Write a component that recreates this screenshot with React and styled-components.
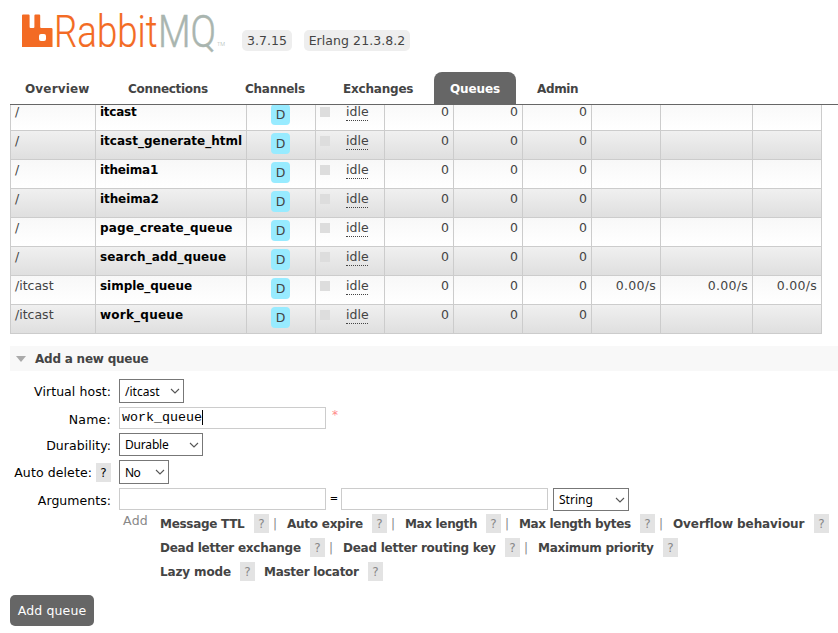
import React from 'react';
import styled, { createGlobalStyle } from 'styled-components';

const GlobalStyle = createGlobalStyle`
  * { box-sizing: border-box; }
  html, body { margin: 0; padding: 0; background: #fff; overflow: hidden; }
  body { font: 12.5px/15px "DejaVu Sans", Verdana, sans-serif; color: #444; }
`;

const Page = styled.div`
  width: 838px;
  height: 633px;
  overflow: hidden;
  display: flex;
  flex-direction: column;
`;

const Text = styled.span`
  letter-spacing: ${(p) => p.$track || 0}px;
  white-space: nowrap;
`;

/* header */
const Header = styled.header`
  flex: none;
  height: 105px;
  margin-left: 10px;
  border-bottom: 1px solid #666;
  display: flex;
  flex-direction: column;
  justify-content: space-between;
`;
const Brand = styled.div`
  display: flex;
  align-items: flex-start;
  height: 60px;
`;
const Logo = styled.svg`
  display: block;
  width: 222px;
  height: 56px;
  margin-right: 10px;
`;
const Version = styled.span`
  height: 21px;
  width: ${(p) => p.$width}px;
  margin: 30px 12px 0 0;
  padding-top: 3px;
  border-radius: 5px;
  background: #eee;
  text-align: center;
`;
const Tabs = styled.nav`
  display: flex;
  height: 32px;
`;
const Tab = styled.a`
  width: ${(p) => p.$width}px;
  padding: 10px 0 0 ${(p) => p.$indent}px;
  border-radius: 8px 8px 0 0;
  font-size: 12px;
  font-weight: bold;
  color: ${(p) => (p.$active ? '#fff' : '#444')};
  background: ${(p) => (p.$active ? '#666' : 'transparent')};
`;

/* queue table */
const TableClip = styled.div`
  flex: none;
  height: 229px;
  margin-left: 10px;
  overflow: hidden;
  display: flex;
  flex-direction: column;
  justify-content: flex-end;
`;
const Row = styled.div`
  flex: none;
  width: 812px;
  height: 29px;
  display: grid;
  grid-template-columns: 85px 151px 69px 69px 69px 69px 69px 69px 92px 69px;
  border-right: 1px solid #ccc;
  border-bottom: 1px solid #ccc;
  background: ${(p) =>
    p.$shaded
      ? 'linear-gradient(#f0f0f0, #dfdfdf)'
      : 'linear-gradient(#f8f8f8, #ffffff)'};
`;
const Cell = styled.div`
  border-left: 1px solid #ccc;
  padding: 2px 4px 0;
  text-align: ${(p) => p.$align || 'left'};
`;
const QueueName = styled(Cell)`
  padding-top: 3px;
  font-size: 12px;
  font-weight: bold;
  color: #000;
  white-space: nowrap;
`;
const Feature = styled.span`
  display: block;
  width: 19px;
  height: 21px;
  padding-top: 3px;
  border-radius: 4px;
  background: #98ebff;
  text-align: center;
`;
const FeatureCell = styled(Cell)`
  padding: 2px 0 0 24px;
`;
const StateCell = styled(Cell)`
  display: flex;
  align-items: flex-start;
`;
const StateMark = styled.i`
  width: 10px;
  height: 10px;
  margin: 3px 16px 0 0;
  background: #ddd;
`;
const State = styled.span`
  width: 22px;
  height: 17px;
  border-bottom: 1px dotted #444;
`;

/* add queue */
const SectionTitle = styled.h2`
  flex: none;
  display: flex;
  align-items: center;
  height: 25px;
  margin: 12px 0 8px 10px;
  padding-left: 6px;
  background: #f8f8f8;
  font-size: 12px;
  line-height: 15px;
`;
const TitleText = styled(Text)`
  padding-top: 1px;
`;
const Arrow = styled.i`
  border: solid transparent;
  border-width: 6px 5.5px 0;
  border-top-color: #aaa;
  margin-right: 9px;
`;
const FormRow = styled.div`
  flex: none;
  display: flex;
  height: ${(p) => p.$height}px;
  margin-bottom: 4px;
  color: #000;
`;
const Label = styled.label`
  width: 111px;
  margin-right: 8px;
  height: 24px;
  display: flex;
  align-items: center;
  justify-content: flex-end;
`;
const LabelText = styled(Text)`
  padding-top: 1px;
`;
const Help = styled.span`
  width: 15px;
  height: 19px;
  padding-top: 3px;
  margin-left: ${(p) => p.$gap}px;
  text-align: center;
  font-size: 12px;
  font-weight: normal;
  background: #e3e3e3;
  color: ${(p) => (p.$dark ? '#000' : '#888')};
`;
const SelectBox = styled.div`
  display: flex;
  align-items: center;
  justify-content: space-between;
  width: ${(p) => p.$width}px;
  height: 100%;
  padding: 0 3px 0 5px;
  border: 1px solid #777;
  color: #000;
  font: 12px/15px "Noto Sans", sans-serif;
`;
const Field = styled.div`
  width: 207px;
  height: 22px;
  padding: 1px 0 0 2px;
  border: 1px solid #ccc;
  display: flex;
  color: #000;
  font: 13.333px/18px "Liberation Mono", monospace;
`;
const Caret = styled.i`
  width: 1px;
  height: 15px;
  margin-top: 1px;
  background: #000;
`;
const Mandatory = styled.span`
  margin: 1px 0 0 6px;
  font-size: 12px;
  color: #f88;
`;
const Equals = styled.span`
  width: 15px;
  padding: 3px 0 0 1px;
  text-align: center;
  font-size: 10px;
`;
const TypeSlot = styled.div`
  height: 23px;
  margin-left: 5px;
`;
const Shortcuts = styled.div`
  flex: none;
  display: flex;
  height: 80px;
  padding-left: 123px;
  margin-top: -2px;
`;
const AddWord = styled.span`
  width: 37px;
  letter-spacing: 0.3px;
  color: #888;
`;
const Lines = styled.div`
  padding-top: 1px;
  display: flex;
  flex-direction: column;
`;
const Line = styled.div`
  display: flex;
  height: 24px;
  align-items: flex-start;
`;
const Shortcut = styled.a`
  display: flex;
  align-items: flex-start;
  justify-content: space-between;
  width: ${(p) => p.$width}px;
  font-size: 12px;
  font-weight: bold;
`;
const ShortcutText = styled(Text)`
  padding-top: 3px;
`;
const Divider = styled.span`
  width: ${(p) => p.$width}px;
  padding-top: 3px;
  padding-left: 4px;
  font-size: 12px;
  color: #888;
`;
const Submit = styled.button`
  flex: none;
  width: 84px;
  height: 31px;
  margin: 2px 0 0 10px;
  padding: 0;
  border: 0;
  border-radius: 5px;
  background: #666;
  color: #fff;
  font: 12.5px/15px "DejaVu Sans", Verdana, sans-serif;
  letter-spacing: 0.15px;
  white-space: nowrap;
`;

const tabs = [
  ['Overview', 103, 15, 0.16],
  ['Connections', 117, 15, -0.3],
  ['Channels', 98, 15, -0.26],
  ['Exchanges', 106, 15, -0.2],
  ['Queues', 82, 16, -0.11],
  ['Admin', 80, 21, -0.37],
];

const queues = [
  ['/', 'itcast', -0.24],
  ['/', 'itcast_generate_html', 0],
  ['/', 'itheima1', -0.18],
  ['/', 'itheima2', -0.1],
  ['/', 'page_create_queue', 0.12],
  ['/', 'search_add_queue', 0.13],
  ['/itcast', 'simple_queue', -0.04, '0.00/s'],
  ['/itcast', 'work_queue', 0.22],
];

// [label, width up to the end of the help box, tracking, width of the gap after it, no divider]
const shortcuts = [
  [
    ['Message TTL', 109, -0.3, 18],
    ['Auto expire', 100, -0.25, 18],
    ['Max length', 96, -0.34, 18],
    ['Max length bytes', 136, -0.34, 18],
    ['Overflow behaviour', 156, -0.09, 0],
  ],
  [
    ['Dead letter exchange', 165, -0.25, 18],
    ['Dead letter routing key', 177, -0.25, 18],
    ['Maximum priority', 140, -0.28, 0],
  ],
  [
    ['Lazy mode', 95, -0.13, 9, true],
    ['Master locator', 119, -0.28, 0],
  ],
];

const Select = ({ width, track, children }) => (
  <SelectBox $width={width}>
    <Text $track={track}>{children}</Text>
    <svg width="10" height="6" viewBox="0 0 10 6">
      <path d="M1 1l4 4 4-4" fill="none" stroke="#555" strokeWidth="1.1" />
    </svg>
  </SelectBox>
);

const RabbitLogo = () => (
  <Logo viewBox="10 0 222 56">
    <path
      fill="#f36b24"
      fillRule="evenodd"
      d="M23 14.500h5.600q1 0 1 1V27q0 1 1 1h2.800q1 0 1-1V15.500q0-1 1-1h3.800q1 0 1 1V27q0 1 1 1h10q1.300 0 1.300 1v18H22V15.500q0-1 1-1zM41 34q-2 0-2 2v3q0 2 2 2h3q2 0 2-2v-3q0-2-2-2z"
    />
    <g fontFamily="Roboto, sans-serif" fontWeight="300" fontSize="45">
      <text x="54" y="46.500" fill="#f36b24" stroke="#f36b24" strokeWidth="0.2" textLength="103.500" lengthAdjust="spacingAndGlyphs">Rabbit</text>
      <text x="158" y="46.500" fill="#a9b5af" stroke="#a9b5af" strokeWidth="0.5" textLength="58" lengthAdjust="spacingAndGlyphs">MQ</text>
    </g>
    <text x="217" y="46" fill="#a9b5af" fontFamily="Roboto, sans-serif" fontWeight="300" fontSize="6" textLength="8" lengthAdjust="spacingAndGlyphs">TM</text>
  </Logo>
);

export default function App() {
  return (
    <Page>
      <GlobalStyle />
      <Header>
        <Brand>
          <RabbitLogo />
          <Version $width={50}><Text>3.7.15</Text></Version>
          <Version $width={106}><Text $track={0.07}>Erlang 21.3.8.2</Text></Version>
        </Brand>
        <Tabs>
          {tabs.map(([name, width, indent, track]) => (
            <Tab key={name} $width={width} $indent={indent} $active={name === 'Queues'}>
              <Text $track={track}>{name}</Text>
            </Tab>
          ))}
        </Tabs>
      </Header>

      <TableClip>
        {queues.map(([host, name, track, rate], i) => (
          <Row key={name} $shaded={i % 2 === 1}>
            <Cell><Text>{host}</Text></Cell>
            <QueueName><Text $track={track}>{name}</Text></QueueName>
            <FeatureCell><Feature>D</Feature></FeatureCell>
            <StateCell><StateMark /><State>idle</State></StateCell>
            <Cell $align="right">0</Cell>
            <Cell $align="right">0</Cell>
            <Cell $align="right">0</Cell>
            <Cell $align="right"><Text $track={0.3}>{rate}</Text></Cell>
            <Cell $align="right"><Text $track={0.3}>{rate}</Text></Cell>
            <Cell $align="right"><Text $track={0.3}>{rate}</Text></Cell>
          </Row>
        ))}
      </TableClip>

      <SectionTitle><Arrow /><TitleText $track={-0.22}>Add a new queue</TitleText></SectionTitle>

      <FormRow $height={24}>
        <Label><LabelText $track={0.07}>Virtual host:</LabelText></Label>
        <Select width={65}>/itcast</Select>
      </FormRow>
      <FormRow $height={22}>
        <Label><LabelText $track={0.25}>Name:</LabelText></Label>
        <Field>work_queue<Caret /></Field>
        <Mandatory>*</Mandatory>
      </FormRow>
      <FormRow $height={23}>
        <Label><LabelText $track={0.05}>Durability:</LabelText></Label>
        <Select width={84} track={-0.18}>Durable</Select>
      </FormRow>
      <FormRow $height={24}>
        <Label><LabelText $track={0.1}>Auto delete:</LabelText><Help $gap={4} $dark>?</Help></Label>
        <Select width={50} track={-0.6}>No</Select>
      </FormRow>
      <FormRow $height={23}>
        <Label><LabelText $track={0.04}>Arguments:</LabelText></Label>
        <Field />
        <Equals>=</Equals>
        <Field />
        <TypeSlot><Select width={76}>String</Select></TypeSlot>
      </FormRow>

      <Shortcuts>
        <AddWord>Add</AddWord>
        <Lines>
          {shortcuts.map((line, i) => (
            <Line key={i}>
              {line.map(([name, width, track, gap, plain]) => (
                <React.Fragment key={name}>
                  <Shortcut $width={width}>
                    <ShortcutText $track={track}>{name}</ShortcutText>
                    <Help $gap={0}>?</Help>
                  </Shortcut>
                  {gap > 0 && <Divider $width={gap}>{plain ? '' : '|'}</Divider>}
                </React.Fragment>
              ))}
            </Line>
          ))}
        </Lines>
      </Shortcuts>
      <Submit>Add queue</Submit>
    </Page>
  );
}
